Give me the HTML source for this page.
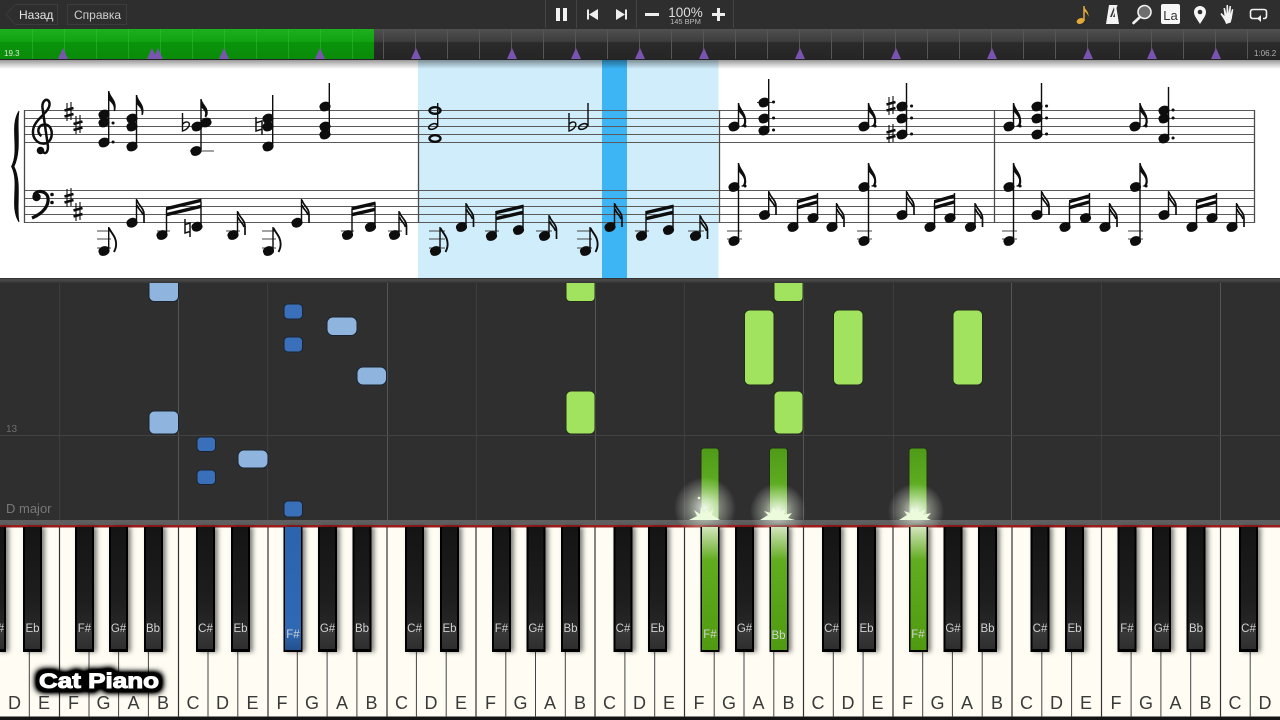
<!DOCTYPE html>
<html><head><meta charset="utf-8"><title>Piano</title>
<style>
html,body{margin:0;padding:0;background:#2e2e2e;overflow:hidden}
svg{display:block;font-family:"Liberation Sans",sans-serif}
</style></head><body>
<svg width="1280" height="720" viewBox="0 0 1280 720" xmlns="http://www.w3.org/2000/svg">
<defs>
<linearGradient id="tl" x1="0" y1="0" x2="0" y2="1"><stop offset="0" stop-color="#505050"/><stop offset=".42" stop-color="#3d3d3d"/><stop offset=".45" stop-color="#2b2b2b"/><stop offset="1" stop-color="#252525"/></linearGradient>
<linearGradient id="gr" x1="0" y1="0" x2="0" y2="1"><stop offset="0" stop-color="#1fb01f"/><stop offset=".42" stop-color="#11a311"/><stop offset=".45" stop-color="#0a930a"/><stop offset="1" stop-color="#0a8c0a"/></linearGradient>
<linearGradient id="sh" x1="0" y1="0" x2="0" y2="1"><stop offset="0" stop-color="#000" stop-opacity=".4"/><stop offset="1" stop-color="#000" stop-opacity="0"/></linearGradient>
<linearGradient id="dv" x1="0" y1="0" x2="0" y2="1"><stop offset="0" stop-color="#2a2a2a"/><stop offset=".3" stop-color="#4c4c4c"/><stop offset="1" stop-color="#333"/></linearGradient>
<linearGradient id="bk" x1="0" y1="527" x2="0" y2="652" gradientUnits="userSpaceOnUse"><stop offset="0" stop-color="#141414"/><stop offset=".6" stop-color="#1e1e1e"/><stop offset=".82" stop-color="#282828"/><stop offset=".84" stop-color="#3a3a3a"/><stop offset="1" stop-color="#2c2c2c"/></linearGradient>
<linearGradient id="gk" x1="0" y1="0" x2="0" y2="1"><stop offset="0" stop-color="#d2e5bc"/><stop offset=".27" stop-color="#62ac20"/><stop offset="1" stop-color="#4f9a10"/></linearGradient>
<linearGradient id="gn" x1="0" y1="0" x2="0" y2="1"><stop offset="0" stop-color="#4f9a18"/><stop offset=".55" stop-color="#5fae22"/><stop offset="1" stop-color="#b4e090"/></linearGradient>
<linearGradient id="bl" x1="0" y1="0" x2="0" y2="1"><stop offset="0" stop-color="#2c64ad"/><stop offset=".85" stop-color="#2f69b4"/><stop offset="1" stop-color="#23508c"/></linearGradient>
<radialGradient id="gl"><stop offset="0" stop-color="#fff" stop-opacity=".85"/><stop offset=".55" stop-color="#e8f5dc" stop-opacity=".36"/><stop offset="1" stop-color="#fff" stop-opacity="0"/></radialGradient>
<filter id="bs" x="-50%" y="-5%" width="220%" height="115%"><feGaussianBlur stdDeviation="2.5"/></filter>
<filter id="b1"><feGaussianBlur stdDeviation=".35"/></filter>
<filter id="cp" x="-20%" y="-80%" width="140%" height="260%"><feMorphology operator="dilate" radius="4" in="SourceAlpha"/><feGaussianBlur stdDeviation="3.2"/><feComponentTransfer><feFuncA type="linear" slope="2"/></feComponentTransfer></filter>
</defs>

<!-- toolbar -->
<rect width="1280" height="29" fill="#2e2e2e"/>
<path d="M15 5 6 14.500l9 9.500" fill="none" stroke="#3b3b3b" stroke-width="1"/>
<path d="M15 4.500H57.500V24.500H15M67.500 4.500H126.500V24.500H67.500z" fill="none" stroke="#3c3c3c"/>
<text x="19" y="19" font-size="12" fill="#e4e4e4">Назад</text>
<text x="74" y="19" font-size="12" fill="#cfcfcf">Справка</text>
<path d="M545.500 0V28M576.500 0V28M636.500 0V28M733.500 0V28" stroke="#444"/>
<path d="M556 8h4v13h-4zM563 8h4v13h-4z" fill="#f2f2f2"/>
<path d="M587 9.500h2v10h-2zM589 14.500l9-5.500v11zM627 9.500h-2v10h2zM625 14.500l-9-5.500v11z" fill="#eee"/>
<path d="M645 13h14v3h-14zM712 13h13v3h-13zM717 8h3v13h-3z" fill="#eee"/>
<text x="685.500" y="17" font-size="13.500" fill="#ddd" text-anchor="middle">100%</text>
<text x="685.500" y="24" font-size="7.500" fill="#bbb" text-anchor="middle">145 BPM</text>
<!-- right icons -->
<path d="M1084 6v15" stroke="#e3a93a" stroke-width="1.500"/>
<ellipse cx="1080.500" cy="21" rx="4" ry="2.800" fill="#e3a93a" transform="rotate(-20 1080.500 21)"/>
<path d="M1084 6c1 4 5 5 4.500 11-.5-3-3-5-4.500-6z" fill="#e3a93a"/>
<path d="M1109 5h7l3 19h-13z" fill="#f4f4f4"/><path d="M1110 17l4-10 1 10z" fill="#333"/><path d="M1112 18l5-13" stroke="#f4f4f4" stroke-width="1.200"/>
<circle cx="1144.500" cy="12" r="6.500" fill="#6e6e6e" stroke="#f2f2f2" stroke-width="1.600"/><path d="M1140 17l-6.500 6" stroke="#f2f2f2" stroke-width="2.600" stroke-linecap="round"/>
<rect x="1161" y="4" width="19" height="20" rx="2" fill="#f6f6f6"/><text x="1170.500" y="20" font-size="13" fill="#333" text-anchor="middle">La</text>
<path d="M1200 24c-3-5-6-8-6-12a6 6 0 0 1 12 0c0 4-3 7-6 12z" fill="#f6f6f6"/><circle cx="1200" cy="12" r="2.300" fill="#2e2e2e"/>
<path d="M1226 24c-1-4-4-7-5.500-10l1-1 3 3-1-8h1.500l1.500 6V5h1.500l.5 8 1-7h1.500l-.5 8 1.500-5 1.300.5-1.500 9c-.5 2-1 3-1 4z" fill="#f4f4f4"/>
<path d="M1259 18.500h-6c-2 0-2.500-1-2.500-2.500v-4c0-1.500.5-2.500 2.500-2.500h11c2 0 2.500 1 2.500 2.500v4c0 1.500-.5 2.500-2.500 2.500h-1" fill="none" stroke="#f2f2f2" stroke-width="1.600"/><path d="M1261 15l-4 3.500 4 3.500z" fill="#f2f2f2"/>

<!-- timeline -->
<rect y="29" width="1280" height="30" fill="url(#tl)"/>
<rect y="29" width="374" height="30" fill="url(#gr)"/>
<path d="M32.500 29V59M64.500 29V59M96.500 29V59M128.500 29V59M160.500 29V59M192.500 29V59M224.500 29V59M256.500 29V59M288.500 29V59M320.500 29V59M352.500 29V59" stroke="#3fbf3f" stroke-opacity=".45"/>
<path d="M383.500 29V59M415.500 29V59M447.500 29V59M479.500 29V59M511.500 29V59M543.500 29V59M575.500 29V59M607.500 29V59M639.500 29V59M671.500 29V59M703.500 29V59M735.500 29V59M767.500 29V59M799.500 29V59M831.500 29V59M863.500 29V59M895.500 29V59M927.500 29V59M959.500 29V59M991.500 29V59M1023.500 29V59M1055.500 29V59M1087.500 29V59M1119.500 29V59M1151.500 29V59M1183.500 29V59M1215.500 29V59M1247.500 29V59" stroke="#565656"/>
<path d="M63 48l5 11H58zM152 48l5 11h-10zM158 48l5 11h-10zM224 48l5 11h-10zM320 48l5 11h-10zM416 48l5 11h-10zM512 48l5 11h-10zM576 48l5 11h-10zM640 48l5 11h-10zM704 48l5 11h-10zM800 48l5 11h-10zM896 48l5 11h-10zM992 48l5 11h-10zM1088 48l5 11h-10zM1152 48l5 11h-10zM1216 48l5 11h-10z" fill="#7a55b0"/>
<text x="4" y="56" font-size="8" fill="#d8e8d8">19.3</text>
<text x="1254" y="56" font-size="8" fill="#b0b0b0">1:06.2</text>
<rect y="59" width="1280" height="1" fill="#222"/>

<!-- score -->
<rect y="60" width="1280" height="218" fill="#fff"/>
<rect x="418" y="60" width="300.500" height="218" fill="#d0edfb"/>
<rect x="602" y="60" width="25" height="218" fill="#3db5f5"/>
<rect y="60" width="1280" height="9" fill="url(#sh)"/>
<path d="M24 110.500H1254M24 118.500H1254M24 126.500H1254M24 134.500H1254M24 142.500H1254M24 190.500H1254M24 198.500H1254M24 206.500H1254M24 214.500H1254M24 222.500H1254" stroke="#5a5a5a" stroke-width="1.100"/>
<path d="M24.500 110V223M418.500 110V223M719.500 110V223M994.500 110V223M1254.500 110V223" stroke="#4a4a4a" stroke-width="1.300"/>
<g filter="url(#b1)">
<!-- brace -->
<path d="M19 111C9 126 20 150 11.500 166.500 20 183 9 207 19 222 16 205 22 182 14 166.500 22 150 16 127 19 111z" fill="#111" stroke="#111" stroke-width=".8"/>
<!-- clefs -->
<path d="M42 151C46 156 49 151 47.500 143L42.500 108C41.500 100 48 97 49.500 103 50.500 112 36 118 33.500 128 31 138 38 144.500 45 143.500 54 142 54 125 45 124.500 38 124 36 133 41.500 136" fill="none" stroke="#111" stroke-width="2.500"/>
<circle cx="40.500" cy="150.500" r="3.800" fill="#111"/>
<path d="M32 218C44 213 49 205 48 198 47 191 37 189 34 195" fill="none" stroke="#111" stroke-width="3.200"/>
<circle cx="36.500" cy="197" r="4.200" fill="#111"/><circle cx="52" cy="194.500" r="1.800" fill="#111"/><circle cx="52" cy="202.500" r="1.800" fill="#111"/>
<!-- sharps -->
<path d="M67 103v18M71 102v18M76 116v18M80 115v18M67 189v18M71 188v18M76 203v18M80 202v18M889 97v18M893 96v18M889 125v18M893 124v18" stroke="#111" stroke-width="1.100"/>
<path d="M64.500 110.500l9-2.500M64.500 116.500l9-2.500M73.500 124l9-2.500M73.500 130l9-2.500M64.500 196.500l9-2.500M64.500 202.500l9-2.500M73.500 210.500l9-2.500M73.500 216.500l9-2.500M886.500 104.500l9-2.500M886.500 110.500l9-2.500M886.500 132.500l9-2.500M886.500 138.500l9-2.500" stroke="#111" stroke-width="2.500"/>
<!-- flats, naturals -->
<path d="M182.500 113v18c4-1 8-5 6.500-8-1.500-2-5-1-6.500 1.500M569 113v18c4-1 8-5 6.500-8-1.500-2-5-1-6.500 1.500" fill="none" stroke="#111" stroke-width="1.400"/>
<path d="M256 117v14l6-1.800M262 135v-14l-6 1.800M185 219v14l5-1.500M190 237v-14l-5 1.500" fill="none" stroke="#111" stroke-width="1.500"/>
<!-- ledgers -->
<path d="M190 151H214M757 102.500H773M97 231H111M97 239H111M97 248H111M157 231H170M226 231H240M262 231H276M262 239H276M262 248H276M341 231H354M388 231H402M429 231H445M429 239H445M429 248H445M485 231H499M536 231H552M577 231H592M577 239H592M577 248H592M635 231H649M688 231H704M727 231H742M727 239H742M857 231H872M857 239H872M1002 231H1017M1002 239H1017M1128 231H1143M1128 239H1143" stroke="#444" stroke-width="1"/>
<!-- stems -->
<path d="M108.700 91V142M136.500 95V146M201 99V150M272.700 95V146M329.300 83V134M437.700 103V127M588 103V126M738.500 103V127M768.700 79V130M868.500 103V127M906.500 83V134M1013.500 103V127M1041.500 83V134M1140 103V127M1168.500 87V138M108.700 227V250M136.500 199V222M166.500 209V235M201 202V226M237.500 211V234M273 227V250M301.500 199V222M352 209V235M375 203V227M399 211V234M440 227V250M466 203V227M496 211V235M523 205V230M549 215V236M590 227V250M614.500 203V227M646 211V235M673 205V230M700 215V236M738.500 163V241M768.700 191V215M797.500 203V227M817.500 193V218M836.500 203V227M868.500 163V241M906.500 191V215M934.500 203V227M954.500 193V218M975 203V227M1013.500 163V241M1041.500 191V215M1069.500 203V227M1089.500 193V218M1109.500 203V227M1140 163V241M1168.500 191V215M1196.500 203V227M1216.500 193V218M1236.500 203V227" stroke="#111" stroke-width="1.400"/>
<!-- noteheads -->
<path fill="#111" d="M99 116.500a5.500 3.900-22 1 0 10-4 5.500 3.900-22 1 0-10 4zM99 124.500a5.500 3.900-22 1 0 10-4 5.500 3.900-22 1 0-10 4zM99 144.500a5.500 3.900-22 1 0 10-4 5.500 3.900-22 1 0-10 4zM127 120.500a5.500 3.900-22 1 0 10-4 5.500 3.900-22 1 0-10 4zM127 128.500a5.500 3.900-22 1 0 10-4 5.500 3.900-22 1 0-10 4zM127 148.500a5.500 3.900-22 1 0 10-4 5.500 3.900-22 1 0-10 4zM192 128.500a5.500 3.900-22 1 0 10-4 5.500 3.900-22 1 0-10 4zM201 124.500a5.500 3.900-22 1 0 10-4 5.500 3.900-22 1 0-10 4zM191 153a5.500 3.900-22 1 0 10-4 5.500 3.900-22 1 0-10 4zM263 120.500a5.500 3.900-22 1 0 10-4 5.500 3.900-22 1 0-10 4zM263 128.500a5.500 3.900-22 1 0 10-4 5.500 3.900-22 1 0-10 4zM263 148.500a5.500 3.900-22 1 0 10-4 5.500 3.900-22 1 0-10 4zM320 108.500a5.500 3.900-22 1 0 10-4 5.500 3.900-22 1 0-10 4zM320 128.500a5.500 3.900-22 1 0 10-4 5.500 3.900-22 1 0-10 4zM320 136.500a5.500 3.900-22 1 0 10-4 5.500 3.900-22 1 0-10 4z"/>
<path fill="#111" d="M99 253a5.500 3.900-22 1 0 10-4 5.500 3.900-22 1 0-10 4zM127 224.700a5.500 3.900-22 1 0 10-4 5.500 3.900-22 1 0-10 4zM157 237a5.500 3.900-22 1 0 10-4 5.500 3.900-22 1 0-10 4zM192 228.700a5.500 3.900-22 1 0 10-4 5.500 3.900-22 1 0-10 4zM228 237a5.500 3.900-22 1 0 10-4 5.500 3.900-22 1 0-10 4zM263.500 253a5.500 3.900-22 1 0 10-4 5.500 3.900-22 1 0-10 4zM292 224.700a5.500 3.900-22 1 0 10-4 5.500 3.900-22 1 0-10 4zM342.500 237a5.500 3.900-22 1 0 10-4 5.500 3.900-22 1 0-10 4zM365.500 229a5.500 3.900-22 1 0 10-4 5.500 3.900-22 1 0-10 4zM389.500 237a5.500 3.900-22 1 0 10-4 5.500 3.900-22 1 0-10 4zM430.500 253a5.500 3.900-22 1 0 10-4 5.500 3.900-22 1 0-10 4zM456.500 229a5.500 3.900-22 1 0 10-4 5.500 3.900-22 1 0-10 4zM486.500 238a5.500 3.900-22 1 0 10-4 5.500 3.900-22 1 0-10 4zM513.500 232a5.500 3.900-22 1 0 10-4 5.500 3.900-22 1 0-10 4zM539.500 238a5.500 3.900-22 1 0 10-4 5.500 3.900-22 1 0-10 4zM580.500 253a5.500 3.900-22 1 0 10-4 5.500 3.900-22 1 0-10 4zM605 229a5.500 3.900-22 1 0 10-4 5.500 3.900-22 1 0-10 4zM636.500 238a5.500 3.900-22 1 0 10-4 5.500 3.900-22 1 0-10 4zM663.500 232a5.500 3.900-22 1 0 10-4 5.500 3.900-22 1 0-10 4zM690.500 238a5.500 3.900-22 1 0 10-4 5.500 3.900-22 1 0-10 4z"/>
<path fill="#111" d="M729 128.500a5.500 3.900-22 1 0 10-4 5.500 3.900-22 1 0-10 4zM759 104.500a5.500 3.900-22 1 0 10-4 5.500 3.900-22 1 0-10 4zM759 120.500a5.500 3.900-22 1 0 10-4 5.500 3.900-22 1 0-10 4zM759 132.500a5.500 3.900-22 1 0 10-4 5.500 3.900-22 1 0-10 4zM859 128.500a5.500 3.900-22 1 0 10-4 5.500 3.900-22 1 0-10 4zM897 108.500a5.500 3.900-22 1 0 10-4 5.500 3.900-22 1 0-10 4zM897 120.500a5.500 3.900-22 1 0 10-4 5.500 3.900-22 1 0-10 4zM897 136.500a5.500 3.900-22 1 0 10-4 5.500 3.900-22 1 0-10 4zM1004 128.500a5.500 3.900-22 1 0 10-4 5.500 3.900-22 1 0-10 4zM1032 108.500a5.500 3.900-22 1 0 10-4 5.500 3.900-22 1 0-10 4zM1032 120.500a5.500 3.900-22 1 0 10-4 5.500 3.900-22 1 0-10 4zM1032 136.500a5.500 3.900-22 1 0 10-4 5.500 3.900-22 1 0-10 4zM1130 128.500a5.500 3.900-22 1 0 10-4 5.500 3.900-22 1 0-10 4zM1159 112.500a5.500 3.900-22 1 0 10-4 5.500 3.900-22 1 0-10 4zM1159 120.500a5.500 3.900-22 1 0 10-4 5.500 3.900-22 1 0-10 4zM1159 140.500a5.500 3.900-22 1 0 10-4 5.500 3.900-22 1 0-10 4z"/>
<path fill="#111" d="M729 189a5.500 3.900-22 1 0 10-4 5.500 3.900-22 1 0-10 4zM729 243a5.500 3.900-22 1 0 10-4 5.500 3.900-22 1 0-10 4zM759.500 217a5.500 3.900-22 1 0 10-4 5.500 3.900-22 1 0-10 4zM788 229a5.500 3.900-22 1 0 10-4 5.500 3.900-22 1 0-10 4zM808 220a5.500 3.900-22 1 0 10-4 5.500 3.900-22 1 0-10 4zM827 229a5.500 3.900-22 1 0 10-4 5.500 3.900-22 1 0-10 4zM859 189a5.500 3.900-22 1 0 10-4 5.500 3.900-22 1 0-10 4zM859 243a5.500 3.900-22 1 0 10-4 5.500 3.900-22 1 0-10 4zM897 217a5.500 3.900-22 1 0 10-4 5.500 3.900-22 1 0-10 4zM925 229a5.500 3.900-22 1 0 10-4 5.500 3.900-22 1 0-10 4zM945 220a5.500 3.900-22 1 0 10-4 5.500 3.900-22 1 0-10 4zM965.500 229a5.500 3.900-22 1 0 10-4 5.500 3.900-22 1 0-10 4zM1004 189a5.500 3.900-22 1 0 10-4 5.500 3.900-22 1 0-10 4zM1004 243a5.500 3.900-22 1 0 10-4 5.500 3.900-22 1 0-10 4zM1032 217a5.500 3.900-22 1 0 10-4 5.500 3.900-22 1 0-10 4zM1060 229a5.500 3.900-22 1 0 10-4 5.500 3.900-22 1 0-10 4zM1080.500 220a5.500 3.900-22 1 0 10-4 5.500 3.900-22 1 0-10 4zM1100 229a5.500 3.900-22 1 0 10-4 5.500 3.900-22 1 0-10 4zM1130.500 189a5.500 3.900-22 1 0 10-4 5.500 3.900-22 1 0-10 4zM1130.500 243a5.500 3.900-22 1 0 10-4 5.500 3.900-22 1 0-10 4zM1159 217a5.500 3.900-22 1 0 10-4 5.500 3.900-22 1 0-10 4zM1187 229a5.500 3.900-22 1 0 10-4 5.500 3.900-22 1 0-10 4zM1207 220a5.500 3.900-22 1 0 10-4 5.500 3.900-22 1 0-10 4zM1227 229a5.500 3.900-22 1 0 10-4 5.500 3.900-22 1 0-10 4z"/>
<!-- open notes -->
<g fill="none" stroke="#111"><ellipse cx="435" cy="138.500" rx="5.500" ry="3.300" stroke-width="2.400"/><ellipse cx="435" cy="110.500" rx="5.500" ry="3.300" stroke-width="2.400"/><ellipse cx="433" cy="126.500" rx="4.500" ry="2.500" stroke-width="1.600" transform="rotate(-22 433 126.500)"/><ellipse cx="583" cy="126.500" rx="4.500" ry="2.500" stroke-width="1.600" transform="rotate(-22 583 126.500)"/></g>
<!-- beams -->
<path fill="#111" d="M166 207l35.500-8.500v3.500L166 210.500zM166 213l35.500-8.500v3.500L166 216.500zM351.500 207l24-5.500v3.500l-24 5.500zM351.500 213l24-5.500v3.500l-24 5.500zM495.500 211l28-6.500v3.500l-28 6.500zM495.500 217l28-6.500v3.500l-28 6.500zM645.500 211l28-6.500v3.500l-28 6.500zM645.500 217l28-6.500v3.500l-28 6.500zM797 200l21-6v3.500l-21 6zM797 206l21-6v3.500l-21 6zM934 200l21-6v3.500l-21 6zM934 206l21-6v3.500l-21 6zM1069 200l21-6v3.500l-21 6zM1069 206l21-6v3.500l-21 6zM1196 200l21-6v3.500l-21 6zM1196 206l21-6v3.500l-21 6z"/>
<!-- eighth flags -->
<path fill="#111" stroke="#111" stroke-width=".7" d="M109 91c1 7 8 9 6 19-.3 1-1 1-1 .5 1-6-3-8-5-11zM136.800 95c1 7 8 9 6 19-.3 1-1 1-1 .5 1-6-3-8-5-11zM201.300 99c1 6 7 8 6 15-1 4-3 3-2 1 1-4-2-6-4-8zM738.800 103c1 7 8 10 7 20-.3 2-2 4-4 3 3-1 3-6 2-8-1-3-4-5-5-7zM868.800 103c1 7 8 10 7 20-.3 2-2 4-4 3 3-1 3-6 2-8-1-3-4-5-5-7zM1013.800 103c1 7 8 10 7 20-.3 2-2 4-4 3 3-1 3-6 2-8-1-3-4-5-5-7zM1140.300 103c1 7 8 10 7 20-.3 2-2 4-4 3 3-1 3-6 2-8-1-3-4-5-5-7zM738.800 163c1 7 8 10 7 20-.3 2-2 4-4 3 3-1 3-6 2-8-1-3-4-5-5-7zM868.800 163c1 7 8 10 7 20-.3 2-2 4-4 3 3-1 3-6 2-8-1-3-4-5-5-7zM1013.800 163c1 7 8 10 7 20-.3 2-2 4-4 3 3-1 3-6 2-8-1-3-4-5-5-7zM1140.300 163c1 7 8 10 7 20-.3 2-2 4-4 3 3-1 3-6 2-8-1-3-4-5-5-7z"/>
<!-- sixteenth flags -->
<path fill="none" stroke="#111" stroke-width="1.700" d="M137 200c1 5 7 8 7 14v9M137 205c1 4 5 6 6 10M238 212c1 5 7 8 7 14v9M238 217c1 4 5 6 6 10M302 200c1 5 7 8 7 14v9M302 205c1 4 5 6 6 10M399.500 212c1 5 7 8 7 14v9M399.500 217c1 4 5 6 6 10M466.500 204c1 5 7 8 7 14v9M466.500 209c1 4 5 6 6 10M549.500 216c1 5 7 8 7 14v9M549.500 221c1 4 5 6 6 10M615 204c1 5 7 8 7 14v9M615 209c1 4 5 6 6 10M700.500 216c1 5 7 8 7 14v9M700.500 221c1 4 5 6 6 10M769 192c1 5 7 8 7 14v9M769 197c1 4 5 6 6 10M837 204c1 5 7 8 7 14v9M837 209c1 4 5 6 6 10M907 192c1 5 7 8 7 14v9M907 197c1 4 5 6 6 10M975.500 204c1 5 7 8 7 14v9M975.500 209c1 4 5 6 6 10M1042 192c1 5 7 8 7 14v9M1042 197c1 4 5 6 6 10M1110 204c1 5 7 8 7 14v9M1110 209c1 4 5 6 6 10M1169 192c1 5 7 8 7 14v9M1169 197c1 4 5 6 6 10M1237 204c1 5 7 8 7 14v9M1237 209c1 4 5 6 6 10"/>
<path fill="none" stroke="#111" stroke-width="1.900" d="M109 228c2 5 8 9 7 18-.2 2-1 4-2 6M273.500 228c2 5 8 9 7 18-.2 2-1 4-2 6M440.500 228c2 5 8 9 7 18-.2 2-1 4-2 6M590.500 228c2 5 8 9 7 18-.2 2-1 4-2 6"/>
<!-- dots -->
<path stroke="#111" stroke-width="3" stroke-linecap="round" d="M113 123h.1M113 142h.1M773.500 102h.1M773.500 118h.1M773.500 130h.1M911.500 106h.1M911.500 118h.1M911.500 134h.1M1046.500 106h.1M1046.500 118h.1M1046.500 134h.1M1173 110h.1M1173 118h.1M1173 138h.1M745 126h.1M875 126h.1M1020 126h.1M1146 126h.1M745 186h.1M875 186h.1M1020 186h.1M1146 186h.1"/>
</g>

<!-- piano roll -->
<rect y="278" width="1280" height="242" fill="#2f2f2f"/>
<path d="M59.500 283V520M267.500 283V520M476.500 283V520M684.500 283V520M893.500 283V520M1101.500 283V520" stroke="#3e3e3e"/>
<path d="M178.500 283V520M387.500 283V520M595.500 283V520M803.500 283V520M1011.500 283V520M1220.500 283V520" stroke="#555"/>
<path d="M0 435.500H1280" stroke="#424242"/>
<text x="6" y="432" font-size="10" fill="#6d6d6d">13</text>
<text x="6" y="513" font-size="13" fill="#787878">D major</text>
<g fill="#8fb4de" stroke="#1b2430" stroke-width="1">
<path d="M149 279V296.500a5 5 0 0 0 5 5H173.500a5 5 0 0 0 5-5V279z"/><rect x="327" y="317" width="30" height="18.500" rx="6"/><rect x="357" y="367" width="29.500" height="18" rx="6"/><rect x="149" y="411" width="29.500" height="23" rx="5"/><rect x="238" y="450" width="30" height="18" rx="6"/>
</g>
<g fill="#3a70b9" stroke="#1b2430" stroke-width="1">
<rect x="284" y="304" width="18.500" height="15" rx="4"/><rect x="284" y="337" width="18.500" height="15" rx="4"/><rect x="197" y="437" width="18.500" height="14.500" rx="4"/><rect x="197" y="470" width="18.500" height="14.500" rx="4"/><rect x="284" y="501" width="18.500" height="16" rx="4"/>
</g>
<g fill="#a1e25f" stroke="#232b1c" stroke-width="1">
<path d="M566 279V297.500a4 4 0 0 0 4 4H591a4 4 0 0 0 4-4V279zM774 279V297.500a4 4 0 0 0 4 4H799a4 4 0 0 0 4-4V279z"/><rect x="744.500" y="310" width="29.500" height="75" rx="5"/><rect x="833.500" y="310" width="29.500" height="75" rx="5"/><rect x="953" y="310" width="29.500" height="75" rx="5"/><rect x="566" y="391" width="29" height="43" rx="5"/><rect x="774" y="391" width="29" height="43" rx="5"/>
</g>
<rect y="278" width="1280" height="5" fill="url(#dv)"/>
<g fill="url(#gn)" stroke="#232b1c" stroke-width="1">
<path d="M701 451a3 3 0 0 1 3-3h12a3 3 0 0 1 3 3v69h-18zM769.500 451a3 3 0 0 1 3-3h12a3 3 0 0 1 3 3v69h-18zM909 451a3 3 0 0 1 3-3h12a3 3 0 0 1 3 3v69h-18z"/>
</g>
<!-- top of piano -->
<rect y="520" width="1280" height="5" fill="#5f5f5f"/>
<rect y="525" width="1280" height="2.500" fill="#9c1c1c"/>
<circle cx="705" cy="508" r="31" fill="url(#gl)"/><circle cx="778" cy="511" r="28" fill="url(#gl)"/><circle cx="916" cy="511" r="28" fill="url(#gl)"/>
<g fill="#ecfbdc">
<path d="M689 520l8-4-3-6 6 4 1-7 3 6 3-4 2 4 4-4-1 6 8 5z"/>
<path d="M760 520l8-5-4-4 7 2 2-6 3 5 3-4 1 5 5-4-1 6 8-2-4 5 7 2z"/>
<path d="M899 520l8-5-3-4 6 2 2-6 3 5 3-4 1 5 6-4-2 6 8-2-4 5 4 2z"/>
<circle cx="699" cy="498" r="1.300"/>
</g>

<!-- white keys -->
<rect y="527.500" width="1280" height="190" fill="#fffdf3"/>
<rect y="716.500" width="1280" height="3.500" fill="#141414"/>
<path d="M59.500 527V717M178.500 527V717M268 527V717M387 527V717M476 527V717M595 527V717M684.500 527V717M803.500 527V717M893 527V717M1012 527V717M1101.500 527V717M1220.500 527V717" stroke="#333" stroke-width="1.200"/>
<path d="M29.300 652V717M89 652V717M118.600 652V717M148.400 652V717M208 652V717M237.800 652V717M297.300 652V717M327.100 652V717M356.900 652V717M416.400 652V717M446.200 652V717M505.800 652V717M535.500 652V717M565.300 652V717M624.900 652V717M654.700 652V717M714.200 652V717M744 652V717M773.800 652V717M833.300 652V717M863.100 652V717M922.700 652V717M952.400 652V717M982.200 652V717M1041.800 652V717M1071.600 652V717M1131.100 652V717M1160.900 652V717M1190.700 652V717M1250.200 652V717" stroke="#444" stroke-width="1"/>
<g font-size="18" fill="#3a3a3a" text-anchor="middle">
<text x="14.500" y="709">D</text><text x="44" y="709">E</text><text x="73.500" y="709">F</text><text x="103.500" y="709">G</text><text x="133.500" y="709">A</text><text x="163" y="709">B</text><text x="193" y="709">C</text><text x="222.500" y="709">D</text><text x="252.500" y="709">E</text><text x="282" y="709">F</text><text x="312" y="709">G</text><text x="342" y="709">A</text><text x="371.500" y="709">B</text><text x="401.500" y="709">C</text><text x="431" y="709">D</text><text x="461" y="709">E</text><text x="490.500" y="709">F</text><text x="520.500" y="709">G</text><text x="550" y="709">A</text><text x="580" y="709">B</text><text x="609.500" y="709">C</text><text x="639.500" y="709">D</text><text x="669" y="709">E</text><text x="699" y="709">F</text><text x="729" y="709">G</text><text x="758.500" y="709">A</text><text x="788.500" y="709">B</text><text x="818" y="709">C</text><text x="848" y="709">D</text><text x="877.500" y="709">E</text><text x="907.500" y="709">F</text><text x="937.500" y="709">G</text><text x="967" y="709">A</text><text x="997" y="709">B</text><text x="1026.500" y="709">C</text><text x="1056.500" y="709">D</text><text x="1086" y="709">E</text><text x="1116" y="709">F</text><text x="1146" y="709">G</text><text x="1175.500" y="709">A</text><text x="1205.500" y="709">B</text><text x="1235" y="709">C</text><text x="1265" y="709">D</text>
</g>
<!-- black key shadows -->
<path filter="url(#bs)" fill="#000" fill-opacity=".5" d="M0 527h9v125H0zM26 527h19v125H26zM78 527h19v125H78zM112 527h19v125h-19zM147 527h19v125h-19zM199 527h19v125h-19zM234 527h19v125h-19zM286.500 527h19v125h-19zM321 527h19v125h-19zM355.500 527h19v125h-19zM408 527h19v125h-19zM443 527h19v125h-19zM495 527h19v125h-19zM529.500 527h19v125h-19zM564 527h19v125h-19zM616.500 527h19v125h-19zM651 527h19v125h-19zM703.500 527h19v125h-19zM738 527h19v125h-19zM772.500 527h19v125h-19zM825 527h19v125h-19zM860 527h19v125h-19zM912 527h19v125h-19zM946.500 527h19v125h-19zM981 527h19v125h-19zM1033.500 527h19v125h-19zM1068 527h19v125h-19zM1120.500 527h19v125h-19zM1155 527h19v125h-19zM1189.500 527h19v125h-19zM1242 527h19v125h-19z"/>
<!-- black keys -->
<path fill="#000" d="M0 527h6v125H0zM23 527h19v125H23zM75 527h19v125H75zM109 527h19v125h-19zM144 527h19v125h-19zM196 527h19v125h-19zM231 527h19v125h-19zM283.500 527h19v125h-19zM318 527h19v125h-19zM352.500 527h19v125h-19zM405 527h19v125h-19zM440 527h19v125h-19zM492 527h19v125h-19zM526.500 527h19v125h-19zM561 527h19v125h-19zM613.500 527h19v125h-19zM648 527h19v125h-19zM700.500 527h19v125h-19zM735 527h19v125h-19zM769.500 527h19v125h-19zM822 527h19v125h-19zM857 527h19v125h-19zM909 527h19v125h-19zM943.500 527h19v125h-19zM978 527h19v125h-19zM1030.500 527h19v125h-19zM1065 527h19v125h-19zM1117.500 527h19v125h-19zM1152 527h19v125h-19zM1186.500 527h19v125h-19zM1239 527h19v125h-19z"/>
<path fill="url(#bk)" d="M0 527h4v122H0zM25 527h15v122H25zM77 527h15v122H77zM111 527h15v122h-15zM146 527h15v122h-15zM198 527h15v122h-15zM233 527h15v122h-15zM320 527h15v122h-15zM354.500 527h15v122h-15zM407 527h15v122h-15zM442 527h15v122h-15zM494 527h15v122h-15zM528.500 527h15v122h-15zM563 527h15v122h-15zM615.500 527h15v122h-15zM650 527h15v122h-15zM737 527h15v122h-15zM824 527h15v122h-15zM859 527h15v122h-15zM945.500 527h15v122h-15zM980 527h15v122h-15zM1032.500 527h15v122h-15zM1067 527h15v122h-15zM1119.500 527h15v122h-15zM1154 527h15v122h-15zM1188.500 527h15v122h-15zM1241 527h15v122h-15z"/>
<!-- active keys -->
<rect x="285" y="527" width="16" height="123" fill="url(#bl)"/>
<g fill="url(#gk)"><rect x="702" y="527" width="16" height="123"/><rect x="771" y="527" width="16" height="123"/><rect x="910.500" y="527" width="16" height="123"/></g>
<!-- black key labels -->
<g font-size="11.500" fill="#d2d2d2" text-anchor="middle">
<text x="1" y="632">#</text><text x="32.500" y="632">Eb</text><text x="84.500" y="632">F#</text><text x="118.500" y="632">G#</text><text x="153" y="632">Bb</text><text x="205.500" y="632">C#</text><text x="240.500" y="632">Eb</text><text x="327.500" y="632">G#</text><text x="362" y="632">Bb</text><text x="414.500" y="632">C#</text><text x="449.500" y="632">Eb</text><text x="501.500" y="632">F#</text><text x="536" y="632">G#</text><text x="570.500" y="632">Bb</text><text x="623" y="632">C#</text><text x="657.500" y="632">Eb</text><text x="744.500" y="632">G#</text><text x="831.500" y="632">C#</text><text x="866.500" y="632">Eb</text><text x="953" y="632">G#</text><text x="987.500" y="632">Bb</text><text x="1040" y="632">C#</text><text x="1074.500" y="632">Eb</text><text x="1127" y="632">F#</text><text x="1161.500" y="632">G#</text><text x="1196" y="632">Bb</text><text x="1248.500" y="632">C#</text>
<text x="293" y="638">F#</text><text x="710" y="638">F#</text><text x="778.500" y="639">Bb</text><text x="918" y="638">F#</text>
</g>
<!-- watermark -->
<text x="39" y="688" font-size="21" font-weight="700" fill="#000" filter="url(#cp)" textLength="120" lengthAdjust="spacingAndGlyphs">Cat Piano</text>
<text x="39" y="688" font-size="21" font-weight="700" fill="#fff" stroke="#fff" stroke-width="1" textLength="120" lengthAdjust="spacingAndGlyphs">Cat Piano</text>
</svg>
</body></html>
